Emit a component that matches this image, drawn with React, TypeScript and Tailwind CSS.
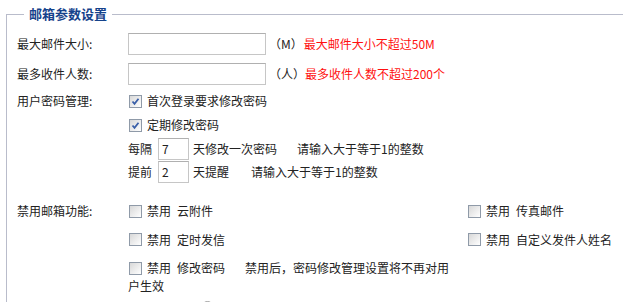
import React from "react";

const font = { fontFamily: '"Noto Sans CJK SC", "Liberation Sans", sans-serif' };

function Check({ checked }: { checked?: boolean }) {
  return (
    <span className="relative inline-block w-[13px] h-[13px] shrink-0 border border-[#8f9aa8] bg-gradient-to-br from-[#d8d8d8] to-[#ffffff]">
      {checked ? (
        <svg viewBox="0 0 11 11" className="absolute left-0 top-0 w-[11px] h-[11px]">
          <path d="M2.5 5.5 L4.5 7.8 L8.5 2.8" stroke="#3a5fa8" strokeWidth="1.8" fill="none" />
        </svg>
      ) : null}
    </span>
  );
}

function CheckText({ checked, children }: { checked?: boolean; children: React.ReactNode }) {
  return (
    <span className="inline-flex items-center">
      <span className="ml-[1px] mr-[5px] inline-flex"><Check checked={checked} /></span>
      {children}
    </span>
  );
}

function Dis({ name }: { name: string }) {
  return (
    <>
      禁用<span className="ml-[6px]">{name}</span>
    </>
  );
}

export default function App() {
  return (
    <div className="w-[623px] h-[302px] overflow-hidden bg-white text-[12px] text-[#222]" style={font}>
      <fieldset className="ml-[6px] mt-[5px] w-[640px] border-t border-l border-[#b9bccb] pl-[10px] pt-[6px]">
        <legend className="ml-[7px] px-[5px] text-[13px] font-bold text-[#15428b] leading-[18px]">邮箱参数设置</legend>
        <div className="flex items-center h-[30px]">
          <div className="w-[111px]">最大邮件大小:</div>
          <div className="w-[138px] h-[22px] border border-[#c6c6c6] border-t-[#b0b0b0] bg-white" />
          <span className="ml-[3px]">（M）</span>
          <span className="ml-[1px] text-[#ff1010]">最大邮件大小不超过50M</span>
        </div>
        <div className="flex items-center h-[30px]">
          <div className="w-[111px]">最多收件人数:</div>
          <div className="w-[138px] h-[22px] border border-[#c6c6c6] border-t-[#b0b0b0] bg-white" />
          <span className="ml-[3px]">（人）</span>
          <span className="text-[#ff1010]">最多收件人数不超过200个</span>
        </div>
        <div className="flex items-center h-[24px]">
          <div className="w-[111px]">用户密码管理:</div>
          <CheckText checked>首次登录要求修改密码</CheckText>
        </div>
        <div className="flex items-center h-[24px]">
          <div className="w-[111px]" />
          <CheckText checked>定期修改密码</CheckText>
        </div>
        <div className="flex items-center h-[23px]">
          <div className="w-[111px]" />
          <span>每隔</span>
          <div className="ml-[6px] w-[31px] h-[22px] border border-[#c6c6c6] border-t-[#b0b0b0] bg-white pl-[3px] leading-[20px]">7</div>
          <span className="ml-[4px]">天修改一次密码</span>
          <span className="ml-[20px]">请输入大于等于1的整数</span>
        </div>
        <div className="flex items-center h-[23px]">
          <div className="w-[111px]" />
          <span>提前</span>
          <div className="ml-[6px] w-[31px] h-[22px] border border-[#c6c6c6] border-t-[#b0b0b0] bg-white pl-[3px] leading-[20px]">2</div>
          <span className="ml-[4px]">天提醒</span>
          <span className="ml-[22px]">请输入大于等于1的整数</span>
        </div>
        <div className="flex mt-[14px]">
          <div className="w-[111px] pt-[5px] leading-[18px]">禁用邮箱功能:</div>
          <div className="grid grid-cols-[339px_auto] leading-[18px]">
            <div className="pt-[5px] pb-[4px]"><CheckText><Dis name="云附件" /></CheckText></div>
            <div className="pt-[5px] pb-[4px]"><CheckText><Dis name="传真邮件" /></CheckText></div>
            <div className="pt-[5px] pb-[4px]"><CheckText><Dis name="定时发信" /></CheckText></div>
            <div className="pt-[5px] pb-[4px]"><CheckText><Dis name="自定义发件人姓名" /></CheckText></div>
            <div className="pt-[5px] pb-[4px] pr-[12px]">
              <span className="ml-[1px] mr-[5px] inline-flex align-[-2px]"><Check /></span>
              <Dis name="修改密码" />
              <span className="ml-[20px]">禁用后，密码修改管理设置将不再对用户生效</span>
            </div>
            <div />
          </div>
        </div>
        <div className="flex h-[20px] pt-[2px]">
          <div className="ml-[184px] w-[13px] h-[13px] rounded-full border border-[#a0a0a0] bg-white" />
        </div>
      </fieldset>
    </div>
  );
}
